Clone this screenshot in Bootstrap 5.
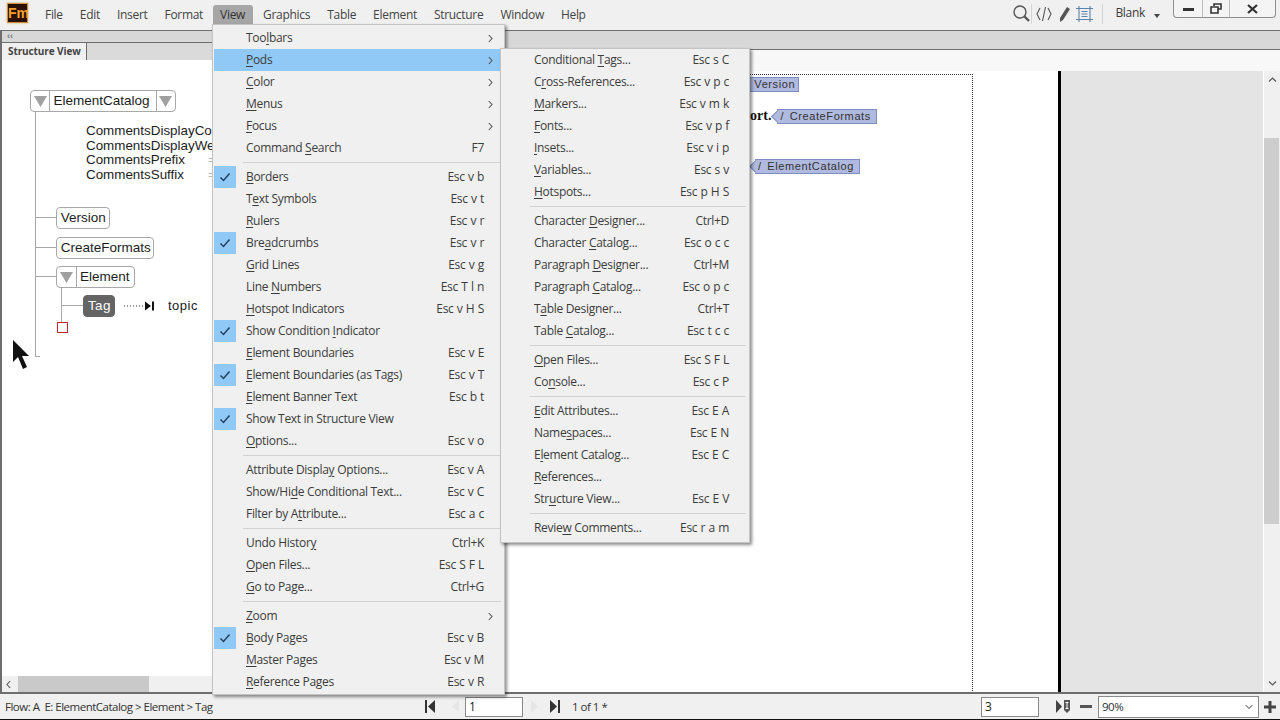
<!doctype html>
<html lang="en">
<head>
    <meta charset="utf-8">
    <meta name="viewport" content="width=device-width, initial-scale=1">
    <title>FrameMaker - View menu</title>
    <link href="https://cdn.jsdelivr.net/npm/bootstrap@5.3.3/dist/css/bootstrap.min.css" rel="stylesheet" crossorigin="anonymous">
    <style>
        body { font: 12px/1.2 "Open Sans", sans-serif; color: #3c3c3c; background: #f0f0f0; height: 720px; overflow: hidden; }
        u { text-underline-offset: 2px; }

        /* title bar */
        .titlebar { height: 30px; flex: none; background: #f0f0f0; }
        .logo { width: 21px; height: 20px; margin: 3px 8.5px 0 7px; background: #2b1000; border: 1px solid #c98f45; box-shadow: 0 0 2px #d9a45c; color: #f3a030; font: bold 14px/18px "Liberation Sans", sans-serif; text-align: center; }
        .titlebar .nav-link { color: #444; font-size: 12px; padding: 0 8.5px; height: 19px; line-height: 19px; margin: 5px 0 0; letter-spacing: -.3px; }
        .titlebar .nav-link.on { background: #a6a6a6; border-radius: 3px 3px 0 0; color: #333; padding: 0 7.5px; margin: 5px 2px 0 1px; }
        .titlebar .blank { margin: 6px 0 0 12px; letter-spacing: -.3px; }
        .tool-sep { width: 1px; height: 20px; background: #d4d4d4; }
        .winbtns { border: 1px solid #8e8e8e; border-top: 0; border-radius: 0 0 4px 4px; height: 18px; background: #f4f4f4; margin-right: 4px; }
        .winbtns > div { height: 17px; display: flex; align-items: center; justify-content: center; }
        .winbtns > div + div { border-left: 1px solid #bdbdbd; }

        /* panes */
        .pod-left { width: 400px; flex: none; border-left: 2px solid #6e6e6e; border-top: 1px solid #6e6e6e; }
        .strip { height: 12px; background: #d8d8d8; border-bottom: 1px solid #6e6e6e; color: #777; font: bold 9px/11px "Liberation Sans", sans-serif; padding-left: 5px; }
        .tabrow { height: 17px; background: #dadada; }
        .tabrow span { display: block; width: 85px; height: 17px; background: #f0f0f0; border-right: 1px solid #6e6e6e; font-weight: 700; font-size: 10px; letter-spacing: -.1px; line-height: 16px; padding-left: 6px; color: #444; }
        .canvas { background: #fff; }
        .hscroll { height: 16px; background: #f0f0f0; }
        .hscroll i { display: block; width: 131px; height: 16px; margin-left: 16px; background: #c9c9c9; }

        .pod-right { border-top: 1px solid #6e6e6e; }
        .strip-r { height: 19px; background: #d8d8d8; border-bottom: 1px solid #6e6e6e; }
        .ruler { height: 21px; background: #f8f8f8; }
        .paper { width: 661px; flex: none; background: #fff; border-right: 3px solid #000; }
        .margins { margin: 3px 85px 0 0; padding-left: 350px; border-top: 1px dotted #333; border-right: 1px dotted #333; }
        .pasteboard { background: #e4e4e4; }
        .vscroll { width: 17px; flex: none; background: #f0f0f0; border-left: 1px solid #fff; }
        .vscroll i { display: block; width: 15px; height: 386px; margin-top: 50px; background: #cdcdcd; }
        .sb-btn { height: 17px; display: flex; align-items: center; justify-content: center; }

        /* structure view nodes */
        .node { position: absolute; background: #fff; border: 1px solid #a8a8a8; border-radius: 4px; height: 22px; display: flex; align-items: center; font: 13.5px/20px "Liberation Sans", sans-serif; color: #1c1c1c; }
        .node > span { padding: 0 3px; }
        .node .tri { width: 20px; height: 20px; display: flex; align-items: center; justify-content: center; padding: 0; }
        .node .tri.l { border-right: 1px solid #a8a8a8; }
        .node .tri.r { border-left: 1px solid #a8a8a8; }
        .node.sel { background: #646464; border-color: #646464; color: #fff; letter-spacing: .3px; }
        .line { position: absolute; background: #a8a8a8; }
        .attr { position: absolute; left: 84px; top: 64px; font: 13.4px/14.67px "Liberation Sans", sans-serif; color: #1c1c1c; white-space: nowrap; }
        .attr b { position: absolute; left: 122px; font-weight: 400; color: #bbb; }
        .plain { position: absolute; font: 13px/16px "Liberation Sans", sans-serif; color: #1c1c1c; letter-spacing: .5px; }
        .red-box { position: absolute; left: 55px; top: 262px; width: 11px; height: 11px; border: 1px solid #c0282c; }

        /* conditional tags on the page */
        .line-tag { height: 14px; display: flex; align-items: center; }
        .doc-tag { position: relative; height: 15px; background: #b0b9de; border: 1px solid #7d8cc6; border-left: 0; font: 11px/13px "Liberation Sans", sans-serif; letter-spacing: .6px; word-spacing: 2px; color: #333; padding: 0 5px 0 3px; margin-left: 6px; white-space: nowrap; }
        .doc-tag::before { content: ""; position: absolute; left: -4px; top: 2px; width: 9px; height: 9px; background: #b0b9de; border-left: 1px solid #7d8cc6; border-bottom: 1px solid #7d8cc6; transform: rotate(45deg); }
        .doc-tag.tag-first { margin-left: -8px; padding-right: 3px; }
        .doc-tag span { position: relative; }
        .serif { font: bold 14px/14px "Liberation Serif", serif; color: #111; }

        /* menus */
        .dropdown-menu.fm { position: absolute; display: block; margin: 0; border-radius: 0; border: 1px solid #c4c4c4; background: #f0f0f0; box-shadow: 2px 2px 3px rgba(0, 0, 0, .45); font-size: 12px; min-width: 0; color: #3c3c3c; }
        #viewMenu { left: 212px; top: 24px; width: 293px; padding: 2px 0 1px 1px; z-index: 10; }
        #podsMenu { left: 500px; top: 48px; width: 250px; padding: 0 0 3px 0; z-index: 11; }
        .fm .dropdown-item { display: flex; align-items: center; height: 22px; padding: 0; color: #3c3c3c; font-size: 12px; letter-spacing: -.3px; }
        .fm .dropdown-item.active { background: #90c8f6; color: #3c3c3c; }
        .fm .dropdown-item .ck { width: 22px; height: 22px; margin-right: 10px; flex: none; display: flex; align-items: center; justify-content: center; }
        .fm .dropdown-item .ck.on { background: #90c8f6; }
        .fm .dropdown-item .sc { margin-left: auto; white-space: nowrap; word-spacing: .5px; }
        .fm .dropdown-item .ar { width: 20px; padding-left: 4px; flex: none; display: flex; justify-content: flex-start; }
        #podsMenu .dropdown-item { padding: 0 20px 0 33px; }
        .fm .dropdown-divider { margin: 3px 3px 3px 29px; border-top: 1px solid #d2d2d2; opacity: 1; }

        /* status bar */
        .statusbar { height: 28px; flex: none; background: #f0f0f0; border-top: 2px solid #6e6e6e; border-bottom: 1px solid #111; font-size: 11.5px; letter-spacing: -.5px; color: #333; }
        .statusbar .form-control { width: 58px; height: 20px; padding: 0 3px; font: 12px/18px "Open Sans", sans-serif; border: 1px solid #8a8a8a; border-radius: 0; color: #222; }
        .statusbar .form-select { width: 161px; height: 22px; padding: 0 0 0 3px; font-size: 11.5px; line-height: 20px; letter-spacing: -.5px; border: 1px solid #8a8a8a; border-radius: 0; color: #333; background-position: right 4px center; background-size: 10px 8px; }
        .cursor { position: absolute; z-index: 5; }
    </style>
</head>
<body class="d-flex flex-column position-relative">
    <svg width="0" height="0" class="position-absolute">
        <symbol id="chk" viewBox="0 0 12 10"><path d="M1.5 5.5 4.5 8.5 10.5 1.5" fill="none" stroke="#24425e" stroke-width="1.5"/></symbol>
        <symbol id="chev" viewBox="0 0 5 9"><path d="M.8 1 4 4.5.8 8" fill="none" stroke="#555" stroke-width="1.1"/></symbol>
        <symbol id="tri" viewBox="0 0 13 13"><path d="M0 1H13L6.5 12Z" fill="#a0a0a0"/></symbol>
    </svg>

    <!-- title bar -->
    <header class="titlebar d-flex">
        <div class="logo">Fm</div>
        <nav class="nav flex-nowrap">
            <a class="nav-link" href="#">File</a>
            <a class="nav-link" href="#">Edit</a>
            <a class="nav-link" href="#">Insert</a>
            <a class="nav-link" href="#">Format</a>
            <a class="nav-link on" href="#">View</a>
            <a class="nav-link" href="#">Graphics</a>
            <a class="nav-link" href="#">Table</a>
            <a class="nav-link" href="#">Element</a>
            <a class="nav-link" href="#">Structure</a>
            <a class="nav-link" href="#">Window</a>
            <a class="nav-link" href="#">Help</a>
        </nav>
        <div class="ms-auto d-flex align-items-start">
            <svg class="mt-1" width="20" height="20" viewBox="-2 0 20 20"><circle cx="7" cy="8" r="6" fill="none" stroke="#555" stroke-width="1.4"/><path d="M11.5 12.5 16 17" stroke="#555" stroke-width="2.4"/></svg>
            <div class="tool-sep mt-1"></div>
            <svg class="mt-1 ms-1" width="16" height="20" viewBox="0 0 16 20"><path d="M4 4 1 10l3 6M12 4l3 6-3 6M9.5 3 6.5 17" fill="none" stroke="#555" stroke-width="1.1"/></svg>
            <svg class="mt-1 ms-1" width="16" height="20" viewBox="0 0 16 20"><path d="M11 3l3 2-7 11-3 2 0-4z" fill="#555"/></svg>
            <svg class="mt-1 ms-1" width="17" height="20" viewBox="0 0 17 20"><path d="M3 2V18M14 2V18M0 4.5H17M0 15.5H17" stroke="#5b84ad" stroke-width="1.1" fill="none"/><path d="M5.5 7.5H11.5M5.5 10H11.5M5.5 12.5H11.5" stroke="#5b84ad" stroke-width="1"/></svg>
            <div class="tool-sep mt-1" style="margin-left:9px"></div>
            <span class="blank">Blank</span>
            <svg width="6" height="4" viewBox="0 0 6 4" style="margin:14px 13px 0 9px"><path d="M0 0H6L3 4Z" fill="#444"/></svg>
            <div class="winbtns d-flex">
                <div style="width:28px"><svg width="11" height="4" viewBox="0 0 11 4"><rect y="1" width="11" height="3" fill="#333"/></svg></div>
                <div style="width:27px"><svg width="12" height="11" viewBox="0 0 12 11"><path d="M4 3V1H11V6H8M1 4H8V10H1Z" fill="none" stroke="#333" stroke-width="1.6"/></svg></div>
                <div style="width:46px"><svg width="11" height="10" viewBox="0 0 11 10"><path d="M1 1 10 9M10 1 1 9" stroke="#333" stroke-width="2.2"/></svg></div>
            </div>
        </div>
    </header>

    <main class="d-flex flex-grow-1" style="min-height:0">
        <!-- structure view pod -->
        <section class="pod-left d-flex flex-column">
            <div class="strip">&lsaquo;&lsaquo;</div>
            <div class="tabrow"><span>Structure View</span></div>
            <div class="canvas flex-grow-1 position-relative">
                <div class="line" style="left:33px;top:49px;width:1px;height:248px"></div>
                <div class="line" style="left:33px;top:296px;width:5px;height:1px"></div>
                <div class="line" style="left:33px;top:157px;width:21px;height:1px"></div>
                <div class="line" style="left:33px;top:187px;width:21px;height:1px"></div>
                <div class="line" style="left:33px;top:216px;width:21px;height:1px"></div>
                <div class="line" style="left:59px;top:228px;width:1px;height:34px"></div>
                <div class="line" style="left:59px;top:245px;width:22px;height:1px"></div>

                <div class="node" style="left:28px;top:30px;width:146px"><span class="tri l"><svg width="13" height="13"><use href="#tri"/></svg></span><span style="padding:0 6px 0 3px">ElementCatalog</span><span class="tri r ms-auto"><svg width="13" height="13"><use href="#tri"/></svg></span></div>
                <div class="attr">CommentsDisplayColor<br>CommentsDisplayWeight<br>CommentsPrefix<b style="top:29px">=</b><br>CommentsSuffix<b style="top:44px">=</b></div>
                <div class="node" style="left:54px;top:147px;width:54px">&nbsp;Version</div>
                <div class="node" style="left:54px;top:177px;width:98px">&nbsp;CreateFormats</div>
                <div class="node" style="left:54px;top:206px;width:79px"><span class="tri l"><svg width="13" height="13"><use href="#tri"/></svg></span><span>Element</span></div>
                <div class="node sel" style="left:81px;top:235px;width:32px">&nbsp;Tag</div>
                <svg class="position-absolute" style="left:122px;top:239px" width="32" height="14" viewBox="0 0 32 14"><path d="M0 7H21" stroke="#333" stroke-dasharray="1 2"/><path d="M21 2.5 27 7 21 11.5Z" fill="#111"/><rect x="28" y="2.5" width="2" height="9" fill="#111"/></svg>
                <div class="plain" style="left:166px;top:238px">topic</div>
                <div class="red-box"></div>
                <svg class="cursor" width="18" height="32" viewBox="0 0 18 32" style="top:279px;left:10px"><path d="M1 1V23L6 18 11 30 15 28 10 17H17Z" fill="#111"/></svg>
            </div>
            <div class="hscroll d-flex align-items-center"><svg class="position-absolute" style="left:6px" width="5" height="9"><use href="#chev" transform="matrix(-1 0 0 1 5 0)"/></svg><i></i></div>
        </section>

        <!-- document area -->
        <section class="pod-right flex-grow-1 d-flex flex-column">
            <div class="strip-r"></div>
            <div class="ruler"></div>
            <div class="d-flex flex-grow-1" style="min-height:0">
                <div class="paper">
                    <div class="margins h-100">
                        <div class="line-tag" style="margin-top:2px"><div class="doc-tag tag-first"><span>/ Version</span></div></div>
                        <div class="line-tag" style="margin-top:18px"><span class="serif">ort.</span><div class="doc-tag"><span>/ CreateFormats</span></div></div>
                        <div class="line-tag" style="margin-top:36px"><div class="doc-tag" style="margin-left:5px"><span>/ ElementCatalog</span></div></div>
                    </div>
                </div>
                <div class="pasteboard flex-grow-1"></div>
                <div class="vscroll d-flex flex-column">
                    <div class="sb-btn"><svg width="9" height="5" viewBox="0 0 9 5"><path d="M1 4.5 4.5 1 8 4.5" fill="none" stroke="#555" stroke-width="1.2"/></svg></div>
                    <i></i>
                    <div class="sb-btn mt-auto"><svg width="9" height="5" viewBox="0 0 9 5"><path d="M1 .5 4.5 4 8 .5" fill="none" stroke="#555" stroke-width="1.2"/></svg></div>
                </div>
            </div>
        </section>
    </main>

    <!-- status bar -->
    <footer class="statusbar d-flex align-items-center">
        <span style="width:424px;padding-left:5px">Flow: A&nbsp; E: ElementCatalog &gt; Element &gt; Tag</span>
        <svg width="12" height="13" viewBox="0 0 12 13"><rect x="1" width="2" height="13" fill="#333"/><path d="M11 0V13L4 6.5Z" fill="#333"/></svg>
        <svg class="ms-3" width="7" height="13" viewBox="0 0 7 13"><path d="M7 0V13L0 6.5Z" fill="#e6e6e6"/></svg>
        <input class="form-control" style="margin-left:6px" value="1">
        <svg class="ms-2" width="7" height="13" viewBox="0 0 7 13"><path d="M0 0V13L7 6.5Z" fill="#e6e6e6"/></svg>
        <svg style="margin-left:11px" width="12" height="13" viewBox="0 0 12 13"><path d="M1 0V13L8 6.5Z" fill="#333"/><rect x="9" width="2" height="13" fill="#333"/></svg>
        <span style="margin-left:11px">1 of 1 *</span>
        <input class="form-control ms-auto" value="3">
        <svg style="margin-left:17px" width="15" height="15" viewBox="0 0 15 15"><path d="M0 1V14L6 7.5Z" fill="#444"/><path d="M8 1H14V11L11 14 8 11Z" fill="#555"/><path d="M9.5 3.5H12.5M11 3.5V9.5M9.5 9.5H12.5" stroke="#fff"/></svg>
        <svg style="margin-left:9px" width="12" height="3" viewBox="0 0 12 3"><rect width="12" height="3" fill="#555"/></svg>
        <select class="form-select" style="margin-left:6px"><option>90%</option></select>
        <svg style="margin:0 4px 0 5px" width="12" height="12" viewBox="0 0 12 12"><path d="M4.5 0H7.5V4.5H12V7.5H7.5V12H4.5V7.5H0V4.5H4.5Z" fill="#444"/></svg>
    </footer>

    <!-- View menu -->
    <div id="viewMenu" class="dropdown-menu fm">
        <a class="dropdown-item"><span class="ck"></span><span>Too<u>l</u>bars</span><span class="sc"></span><span class="ar"><svg width="5" height="9"><use href="#chev"/></svg></span></a>
        <a class="dropdown-item active"><span class="ck"></span><span><u>P</u>ods</span><span class="sc"></span><span class="ar"><svg width="5" height="9"><use href="#chev"/></svg></span></a>
        <a class="dropdown-item"><span class="ck"></span><span><u>C</u>olor</span><span class="sc"></span><span class="ar"><svg width="5" height="9"><use href="#chev"/></svg></span></a>
        <a class="dropdown-item"><span class="ck"></span><span><u>M</u>enus</span><span class="sc"></span><span class="ar"><svg width="5" height="9"><use href="#chev"/></svg></span></a>
        <a class="dropdown-item"><span class="ck"></span><span><u>F</u>ocus</span><span class="sc"></span><span class="ar"><svg width="5" height="9"><use href="#chev"/></svg></span></a>
        <a class="dropdown-item"><span class="ck"></span><span>Command <u>S</u>earch</span><span class="sc">F7</span><span class="ar"></span></a>
        <hr class="dropdown-divider">
        <a class="dropdown-item"><span class="ck on"><svg width="12" height="10"><use href="#chk"/></svg></span><span><u>B</u>orders</span><span class="sc">Esc v b</span><span class="ar"></span></a>
        <a class="dropdown-item"><span class="ck"></span><span>T<u>e</u>xt Symbols</span><span class="sc">Esc v t</span><span class="ar"></span></a>
        <a class="dropdown-item"><span class="ck"></span><span><u>R</u>ulers</span><span class="sc">Esc v r</span><span class="ar"></span></a>
        <a class="dropdown-item"><span class="ck on"><svg width="12" height="10"><use href="#chk"/></svg></span><span>Bre<u>a</u>dcrumbs</span><span class="sc">Esc v r</span><span class="ar"></span></a>
        <a class="dropdown-item"><span class="ck"></span><span><u>G</u>rid Lines</span><span class="sc">Esc v g</span><span class="ar"></span></a>
        <a class="dropdown-item"><span class="ck"></span><span>Line <u>N</u>umbers</span><span class="sc">Esc T l n</span><span class="ar"></span></a>
        <a class="dropdown-item"><span class="ck"></span><span><u>H</u>otspot Indicators</span><span class="sc">Esc v H S</span><span class="ar"></span></a>
        <a class="dropdown-item"><span class="ck on"><svg width="12" height="10"><use href="#chk"/></svg></span><span>Show Condition <u>I</u>ndicator</span><span class="sc"></span><span class="ar"></span></a>
        <a class="dropdown-item"><span class="ck"></span><span><u>E</u>lement Boundaries</span><span class="sc">Esc v E</span><span class="ar"></span></a>
        <a class="dropdown-item"><span class="ck on"><svg width="12" height="10"><use href="#chk"/></svg></span><span><u>E</u>lement Boundaries (as Tags)</span><span class="sc">Esc v T</span><span class="ar"></span></a>
        <a class="dropdown-item"><span class="ck"></span><span><u>E</u>lement Banner Text</span><span class="sc">Esc b t</span><span class="ar"></span></a>
        <a class="dropdown-item"><span class="ck on"><svg width="12" height="10"><use href="#chk"/></svg></span><span>Show Text in Structure View</span><span class="sc"></span><span class="ar"></span></a>
        <a class="dropdown-item"><span class="ck"></span><span><u>O</u>ptions...</span><span class="sc">Esc v o</span><span class="ar"></span></a>
        <hr class="dropdown-divider">
        <a class="dropdown-item"><span class="ck"></span><span>Attribute Displa<u>y</u> Options...</span><span class="sc">Esc v A</span><span class="ar"></span></a>
        <a class="dropdown-item"><span class="ck"></span><span>Show/Hi<u>d</u>e Conditional Text...</span><span class="sc">Esc v C</span><span class="ar"></span></a>
        <a class="dropdown-item"><span class="ck"></span><span>Filter by A<u>t</u>tribute...</span><span class="sc">Esc a c</span><span class="ar"></span></a>
        <hr class="dropdown-divider">
        <a class="dropdown-item"><span class="ck"></span><span>Undo Histor<u>y</u></span><span class="sc">Ctrl+K</span><span class="ar"></span></a>
        <a class="dropdown-item"><span class="ck"></span><span><u>O</u>pen Files...</span><span class="sc">Esc S F L</span><span class="ar"></span></a>
        <a class="dropdown-item"><span class="ck"></span><span><u>G</u>o to Page...</span><span class="sc">Ctrl+G</span><span class="ar"></span></a>
        <hr class="dropdown-divider">
        <a class="dropdown-item"><span class="ck"></span><span><u>Z</u>oom</span><span class="sc"></span><span class="ar"><svg width="5" height="9"><use href="#chev"/></svg></span></a>
        <a class="dropdown-item"><span class="ck on"><svg width="12" height="10"><use href="#chk"/></svg></span><span><u>B</u>ody Pages</span><span class="sc">Esc v B</span><span class="ar"></span></a>
        <a class="dropdown-item"><span class="ck"></span><span><u>M</u>aster Pages</span><span class="sc">Esc v M</span><span class="ar"></span></a>
        <a class="dropdown-item"><span class="ck"></span><span><u>R</u>eference Pages</span><span class="sc">Esc v R</span><span class="ar"></span></a>
    </div>

    <!-- Pods submenu -->
    <div id="podsMenu" class="dropdown-menu fm">
        <a class="dropdown-item"><span>Conditional <u>T</u>ags...</span><span class="sc">Esc s C</span></a>
        <a class="dropdown-item"><span>C<u>r</u>oss-References...</span><span class="sc">Esc v p c</span></a>
        <a class="dropdown-item"><span><u>M</u>arkers...</span><span class="sc">Esc v m k</span></a>
        <a class="dropdown-item"><span><u>F</u>onts...</span><span class="sc">Esc v p f</span></a>
        <a class="dropdown-item"><span><u>I</u>nsets...</span><span class="sc">Esc v i p</span></a>
        <a class="dropdown-item"><span><u>V</u>ariables...</span><span class="sc">Esc s v</span></a>
        <a class="dropdown-item"><span><u>H</u>otspots...</span><span class="sc">Esc p H S</span></a>
        <hr class="dropdown-divider">
        <a class="dropdown-item"><span>Character <u>D</u>esigner...</span><span class="sc">Ctrl+D</span></a>
        <a class="dropdown-item"><span>Character <u>C</u>atalog...</span><span class="sc">Esc o c c</span></a>
        <a class="dropdown-item"><span>Paragraph <u>D</u>esigner...</span><span class="sc">Ctrl+M</span></a>
        <a class="dropdown-item"><span>Paragraph <u>C</u>atalog...</span><span class="sc">Esc o p c</span></a>
        <a class="dropdown-item"><span>T<u>a</u>ble Designer...</span><span class="sc">Ctrl+T</span></a>
        <a class="dropdown-item"><span>Table <u>C</u>atalog...</span><span class="sc">Esc t c c</span></a>
        <hr class="dropdown-divider">
        <a class="dropdown-item"><span><u>O</u>pen Files...</span><span class="sc">Esc S F L</span></a>
        <a class="dropdown-item"><span>Co<u>n</u>sole...</span><span class="sc">Esc c P</span></a>
        <hr class="dropdown-divider">
        <a class="dropdown-item"><span><u>E</u>dit Attributes...</span><span class="sc">Esc E A</span></a>
        <a class="dropdown-item"><span>Name<u>s</u>paces...</span><span class="sc">Esc E N</span></a>
        <a class="dropdown-item"><span>E<u>l</u>ement Catalog...</span><span class="sc">Esc E C</span></a>
        <a class="dropdown-item"><span><u>R</u>eferences...</span><span class="sc"></span></a>
        <a class="dropdown-item"><span>Str<u>u</u>cture View...</span><span class="sc">Esc E V</span></a>
        <hr class="dropdown-divider">
        <a class="dropdown-item"><span>Revie<u>w</u> Comments...</span><span class="sc">Esc r a m</span></a>
    </div>

    <script src="https://cdn.jsdelivr.net/npm/bootstrap@5.3.3/dist/js/bootstrap.bundle.min.js" crossorigin="anonymous"></script>
</body>
</html>
